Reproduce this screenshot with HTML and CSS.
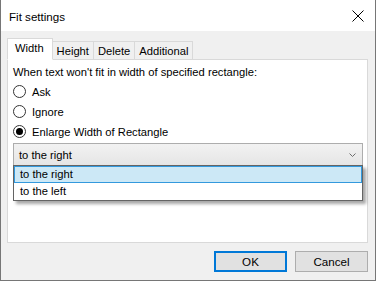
FILE: index.html
```html
<!DOCTYPE html>
<html lang="en">
<head>
    <meta charset="UTF-8">
    <meta name="viewport" content="width=device-width, initial-scale=1.0">
    <title>Fit settings</title>
    <link rel="stylesheet" href="styles.css">
</head>
<body>
    <div class="window">
        <div class="titlebar">
            <span class="title">Fit settings</span>
            <svg class="close" width="12" height="12" viewBox="0 0 12 12">
                <path d="M0.5 0.5 L11.5 11.5 M11.5 0.5 L0.5 11.5" stroke="#000" stroke-width="1" fill="none"/>
            </svg>
        </div>

        <div class="content">
            <div class="tabs">
                <div class="tab active">Width</div>
                <div class="tab">Height</div>
                <div class="tab">Delete</div>
                <div class="tab">Additional</div>
            </div>

            <div class="panel">
                <p class="label">When text won't fit in width of specified rectangle:</p>

                <div class="radios">
                    <label class="radio"><span class="dot"></span>Ask</label>
                    <label class="radio"><span class="dot"></span>Ignore</label>
                    <label class="radio checked"><span class="dot"></span>Enlarge Width of Rectangle</label>
                </div>

                <div class="combo-wrap">
                    <div class="combo">
                        <span>to the right</span>
                        <svg class="chevron" width="7" height="4" viewBox="0 0 7 4">
                            <path d="M0.5 0.5 L3.5 3.5 L6.5 0.5" stroke="#6d6d6d" stroke-width="1" fill="none"/>
                        </svg>
                    </div>
                    <ul class="dropdown">
                        <li class="selected">to the right</li>
                        <li>to the left</li>
                    </ul>
                </div>
            </div>

            <div class="buttons">
                <button class="btn default">OK</button>
                <button class="btn">Cancel</button>
            </div>
        </div>
    </div>
</body>
</html>
```

FILE: styles.css
```css
* {
    margin: 0;
    padding: 0;
    box-sizing: border-box;
}

body {
    font-family: "Liberation Sans", Arial, sans-serif;
    font-size: 11.2px;
    color: #000;
    background-color: #f0f0f0;
}

.window {
    width: 376px;
    height: 281px;
    border: 1px solid #767676;
    border-top: none;
    display: flex;
    flex-direction: column;
    background-color: #f0f0f0;
}

.titlebar {
    height: 31px;
    background-color: #fff;
    display: flex;
    align-items: center;
    justify-content: space-between;
    padding: 0 11px 0 8px;
}

.title {
    font-size: 11.6px;
    padding-top: 1px;
}

.close {
    display: block;
    margin-top: 1px;
}

.content {
    flex: 1;
    display: flex;
    flex-direction: column;
    padding: 7px 7px 0 6px;
}

.tabs {
    display: flex;
    align-items: flex-end;
    height: 22px;
    margin-bottom: -1px;
    position: relative;
    z-index: 1;
}

.tab {
    height: 19px;
    line-height: 18px;
    padding: 0 4px;
    border: 1px solid #d9d9d9;
    border-left: none;
    background-color: #f0f0f0;
}

.tab.active {
    height: 22px;
    line-height: 19px;
    padding: 0 8px 0 7px;
    border-left: 1px solid #d9d9d9;
    border-bottom-color: #fff;
    background-color: #fff;
}

.panel {
    height: 184px;
    background-color: #fff;
    border: 1px solid #d9d9d9;
    padding: 5px 5px 0 5px;
    display: flex;
    flex-direction: column;
}

.label {
    line-height: 14px;
}

.radios {
    display: flex;
    flex-direction: column;
    gap: 5px;
    margin-top: 5px;
}

.radio {
    display: flex;
    align-items: center;
    gap: 6px;
    height: 15px;
}

.dot {
    width: 13px;
    height: 13px;
    border: 1px solid #333;
    border-radius: 50%;
    display: flex;
    align-items: center;
    justify-content: center;
    background-color: #fff;
}

.radio.checked .dot::after {
    content: "";
    width: 7px;
    height: 7px;
    border-radius: 50%;
    background-color: #000;
}

.combo-wrap {
    position: relative;
    margin-top: 4px;
    width: 350px;
}

.combo {
    height: 23px;
    border: 1px solid #adadad;
    background: linear-gradient(#f2f2f2, #e5e5e5);
    display: flex;
    align-items: center;
    justify-content: space-between;
    padding: 0 6px 0 5px;
}

.chevron {
    display: block;
}

.dropdown {
    position: absolute;
    top: 22px;
    left: 0;
    width: 350px;
    list-style: none;
    background-color: #fff;
    border: 1px solid #646464;
    box-shadow: 3px 3px 3px rgba(0, 0, 0, 0.35);
}

.dropdown li {
    height: 17px;
    line-height: 15px;
    padding: 0 5px;
    border: 1px solid transparent;
}

.dropdown li.selected {
    background-color: #cce8f6;
    border-color: #3399dd;
}

.buttons {
    display: flex;
    justify-content: flex-end;
    gap: 8px;
    padding-top: 8px;
}

.btn {
    width: 73px;
    height: 21px;
    font-family: inherit;
    font-size: 11.6px;
    background-color: #e1e1e1;
    border: 1px solid #adadad;
    color: #000;
}

.btn.default {
    border: 2px solid #0078d7;
}
```
